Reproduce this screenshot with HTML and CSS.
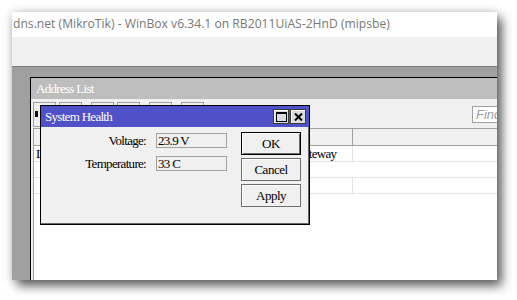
FILE: index.html
```html
<!DOCTYPE html>
<html>
<head>
<meta charset="utf-8">
<link rel="stylesheet" href="styles.css">
</head>
<body>
<div class="screen">
  <div class="win">
    <div class="titlebar">dns.net (MikroTik) - WinBox v6.34.1 on RB2011UiAS-2HnD (mipsbe)</div>
    <div class="menubar"></div>
    <div class="mdi">
      <div class="child">
        <div class="child-title">Address List</div>
        <div class="child-body">
          <div class="toolbar">
            <div class="tgroup">
              <span class="tbtn"><span class="mark"></span></span>
              <span class="tbtn"></span>
            </div>
            <div class="tgroup">
              <span class="tbtn"></span>
              <span class="tbtn"></span>
            </div>
            <div class="tgroup">
              <span class="tbtn"></span>
            </div>
            <div class="tgroup">
              <span class="tbtn"></span>
            </div>
            <div class="find">Find</div>
          </div>
          <div class="table">
            <div class="trow thead"><div class="cell"></div><div class="cell"></div><div class="cell"></div></div>
            <div class="trow"><div class="cell">D</div><div class="cell">gateway</div><div class="cell"></div></div>
            <div class="trow"><div class="cell wide"></div></div>
            <div class="trow"><div class="cell"></div><div class="cell"></div><div class="cell"></div></div>
          </div>
        </div>
      </div>

      <div class="dialog">
        <div class="dlg-title">
          <span class="dlg-name">System Health</span>
          <div class="dlg-ctrls">
            <span class="ctrl">
              <svg width="11" height="10" viewBox="0 0 11 10"><rect x="0.5" y="0.5" width="10" height="9" fill="none" stroke="#000" stroke-width="1"/><rect x="0" y="0" width="11" height="2" fill="#000"/></svg>
            </span>
            <span class="ctrl">
              <svg width="9" height="8" viewBox="0 0 9 8"><path d="M1 0.5 L8 7.5 M8 0.5 L1 7.5" stroke="#000" stroke-width="2" fill="none"/></svg>
            </span>
          </div>
        </div>
        <div class="dlg-body">
          <div class="form">
            <div class="frow"><span class="label">Voltage:</span><span class="field">23.9 V</span></div>
            <div class="frow"><span class="label">Temperature:</span><span class="field">33 C</span></div>
          </div>
          <div class="buttons">
            <button class="btn default">OK</button>
            <button class="btn">Cancel</button>
            <button class="btn">Apply</button>
          </div>
        </div>
      </div>
    </div>
  </div>
</div>
</body>
</html>
```
FILE: styles.css
```css
html, body {
  margin: 0;
  padding: 0;
  background: #fff;
}
body {
  width: 517px;
  height: 300px;
  overflow: hidden;
}
.screen {
  padding: 12px 0 0 12px;
}
.win {
  width: 485px;
  height: 268px;
  display: flex;
  flex-direction: column;
  box-shadow: 5px 6px 10px rgba(0, 0, 0, 0.6), 0 0 9px rgba(0, 0, 0, 0.18);
  background: #f0f0f0;
}
.titlebar {
  height: 25px;
  background: #fff;
  color: #777;
  font-family: "Open Sans", "Noto Sans", sans-serif;
  font-size: 12.15px;
  line-height: 24px;
  padding-left: 1px;
  white-space: nowrap;
  overflow: hidden;
}
.menubar {
  height: 29px;
  background: #f0f0f0;
  border-bottom: 1px solid #7c7c7c;
}
.mdi {
  flex: 1;
  position: relative;
  background: #a0a0a0;
  padding: 10px 0 0 18px;
  display: flex;
  overflow: hidden;
}
.child {
  flex: 1;
  border-left: 1px solid #000;
  border-top: 1px solid #000;
  display: flex;
  flex-direction: column;
  background: #f0f0f0;
}
.child-title {
  height: 21px;
  background: #bdbdbd;
  color: #fff;
  font-family: "Liberation Serif", serif;
  font-size: 13px;
  letter-spacing: -0.7px;
  line-height: 21px;
  padding-left: 5px;
}
.child-body {
  flex: 1;
  display: flex;
  flex-direction: column;
  padding-left: 2px;
}
.toolbar {
  height: 29px;
  display: flex;
  align-items: flex-start;
  padding-top: 3px;
  box-sizing: border-box;
  gap: 9px;
}
.tgroup {
  display: flex;
  gap: 3px;
}
.tbtn {
  width: 21px;
  height: 23px;
  border: 1px solid #a0a0a0;
  background: #f0f0f0;
  position: relative;
  display: block;
}
.mark {
  position: absolute;
  left: 1px;
  top: 8px;
  width: 3px;
  height: 6px;
  background: #111;
}
.find {
  margin-left: auto;
  margin-right: -40px;
  margin-top: 4px;
  width: 60px;
  height: 15px;
  border: 1px solid #a0a0a0;
  background: #fff;
  color: #a0a0a0;
  font-family: "Liberation Sans", Arial, sans-serif;
  font-style: italic;
  font-size: 13px;
  line-height: 15px;
  padding-left: 3px;
}
.table {
  flex: 1;
  background: #fff;
  border-left: 1px solid #a0a0a0;
  font-family: "Liberation Serif", serif;
  font-size: 13px;
  letter-spacing: -0.7px;
}
.trow {
  display: grid;
  grid-template-columns: 262px 57px 1fr;
  height: 15px;
  border-bottom: 1px solid #e3e3e3;
  line-height: 15px;
}
.trow .cell {
  border-right: 1px solid #e3e3e3;
  padding-left: 2px;
  overflow: hidden;
  white-space: nowrap;
}
.trow .cell:last-child {
  border-right: none;
}
.trow .cell.wide {
  grid-column: 1 / 4;
}
.thead {
  height: 16px;
  background: #f0f0f0;
  border-top: 1px solid #a0a0a0;
  border-bottom: 1px solid #a0a0a0;
}
.thead .cell {
  border-right: 1px solid #a0a0a0;
}
.dialog {
  position: absolute;
  left: 28px;
  top: 38px;
  width: 270px;
  height: 120px;
  box-sizing: border-box;
  border: 1px solid #000;
  box-shadow: inset -1px -1px 0 #6a6a6a;
  background: #f0f0f0;
  display: flex;
  flex-direction: column;
  font-family: "Liberation Serif", serif;
  font-size: 13px;
  letter-spacing: -0.7px;
}
.dlg-title {
  height: 21px;
  background: #5050c8;
  color: #fff;
  display: flex;
  align-items: center;
  padding: 0 3px 0 4px;
}
.dlg-name {
  flex: 1;
}
.dlg-ctrls {
  display: flex;
  gap: 1px;
}
.ctrl {
  width: 14px;
  height: 13px;
  background: #dcdcdc;
  border: 1px solid #3a3a3a;
  box-shadow: inset 1px 1px 0 #fff;
  display: flex;
  align-items: center;
  justify-content: center;
}
.dlg-body {
  flex: 1;
  display: flex;
  padding: 5px 8px 0 0;
}
.form {
  flex: 1;
  display: flex;
  flex-direction: column;
  gap: 8px;
  padding-top: 1px;
}
.frow {
  display: flex;
  align-items: center;
  height: 15px;
}
.label {
  width: 105px;
  text-align: right;
  padding-right: 10px;
}
.field {
  width: 68px;
  height: 13px;
  border: 1px solid #a0a0a0;
  line-height: 13px;
  padding-left: 1px;
}
.buttons {
  display: flex;
  flex-direction: column;
  gap: 3px;
  width: 60px;
}
.btn {
  width: 60px;
  height: 23px;
  margin: 0;
  padding: 0;
  border: 1px solid #6e6e6e;
  background: #f0f0f0;
  box-shadow: inset 1px 1px 0 #fff;
  font-family: "Liberation Serif", serif;
  font-size: 13px;
  letter-spacing: -0.5px;
  color: #000;
}
.btn.default {
  border: 1px solid #000;
  box-shadow: inset 1px 1px 0 #fff, inset -1px -1px 0 #6e6e6e;
}
```
